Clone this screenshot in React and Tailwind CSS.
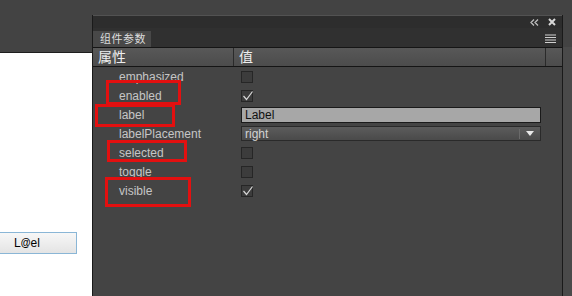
import React from "react";

const rows = [
  { name: "emphasized", type: "check", checked: false },
  { name: "enabled", type: "check", checked: true },
  { name: "label", type: "input", value: "Label" },
  { name: "labelPlacement", type: "select", value: "right" },
  { name: "selected", type: "check", checked: false },
  { name: "toggle", type: "check", checked: false },
  { name: "visible", type: "check", checked: true },
];

function Check({ checked }) {
  return (
    <div className="relative w-[12px] h-[12px] border border-[#262626] bg-[#3c3c3c]">
      {checked && (
        <svg className="absolute left-[0px] top-[-1px]" width="12" height="12" viewBox="0 0 12 12">
          <path d="M1.5 6 L4.5 9.5 L10.5 1.5" fill="none" stroke="#d8d8d8" strokeWidth="1.2" />
        </svg>
      )}
    </div>
  );
}

export default function App() {
  return (
    <div
      className="relative w-[572px] h-[296px] overflow-hidden bg-[#434343] flex"
      style={{ fontFamily: '"Liberation Sans", "Noto Sans CJK SC", sans-serif' }}
    >
      {/* left stage */}
      <div className="w-[92px] flex flex-col shrink-0">
        <div className="h-[53px] bg-[#434343] border-b border-[#1e1e1e]" />
        <div className="flex-1 bg-white pt-[179px]">
          <div className="ml-[-4px] w-[81px] h-[22px] border border-[#8ab6d6] bg-gradient-to-b from-[#f7f7f7] to-[#e4e4e4] flex items-center pl-[17px] text-[12px] text-black leading-none">
            L<span className="font-bold text-[10px]">@</span>el
          </div>
        </div>
      </div>

      {/* panel */}
      <div className="mt-[15px] w-[471px] flex flex-col border-l border-r border-[#1a1a1a] bg-[#444444] shrink-0">
        {/* title bar */}
        <div className="h-[13px] bg-[#2d2d2d] border-t border-[#525252] flex items-center justify-end pr-[6px] gap-[9px]">
          <svg width="9" height="7" viewBox="0 0 9 7">
            <path d="M4 0.5 L1 3.5 L4 6.5 M8 0.5 L5 3.5 L8 6.5" fill="none" stroke="#bdbdbd" strokeWidth="1.3" />
          </svg>
          <svg width="8" height="8" viewBox="0 0 8 8">
            <path d="M1 1 L7 7 M7 1 L1 7" stroke="#d8d8d8" strokeWidth="2" />
          </svg>
        </div>
        {/* tab row */}
        <div className="h-[19px] bg-[#303030] flex items-end justify-between">
          <div className="h-[16px] w-[58px] bg-[#484848] flex items-center pl-[7px] text-[11px] text-[#dcdcdc] leading-none tracking-[0.5px]">
            组件参数
          </div>
          <svg className="mb-[4px] mr-[6px]" width="11" height="9" viewBox="0 0 11 9">
            <path d="M0 1 H11 M0 3.5 H11 M0 6 H11 M0 8.5 H11" stroke="#cfcfcf" strokeWidth="1.2" />
          </svg>
        </div>
        {/* header */}
        <div className="h-[20px] border-t border-b border-[#151515] bg-gradient-to-b from-[#585858] to-[#4c4c4c] flex items-center text-[14px] text-[#eeeeee] leading-none">
          <div className="w-[141px] pl-[5px] h-full flex items-center border-r border-[#2a2a2a]">属性</div>
          <div className="w-[312px] pl-[5px] h-full flex items-center border-r border-[#2a2a2a]">值</div>
        </div>
        {/* rows */}
        <div className="flex flex-col pt-[0px]">
          {rows.map((r) => (
            <div key={r.name} className="h-[19px] flex items-center">
              <div className="w-[148px] pl-[26px] text-[12px] text-[#c6c6c6] leading-none">{r.name}</div>
              <div className="w-[300px] flex items-center">
                {r.type === "check" && <Check checked={r.checked} />}
                {r.type === "input" && (
                  <div className="w-[300px] h-[16px] border border-[#1a1a1a] bg-[#a7a7a7] flex items-center pl-[3px] text-[12px] text-[#111] leading-none">
                    {r.value}
                  </div>
                )}
                {r.type === "select" && (
                  <div className="w-[300px] h-[15px] border border-[#2a2a2a] bg-gradient-to-b from-[#5c5c5c] to-[#4a4a4a] flex items-center text-[12px] text-[#d2d2d2] leading-none">
                    <span className="flex-1 pl-[3px]">{r.value}</span>
                    <span className="w-[1px] h-[10px] bg-[#2c2c2c] border-r border-[#6a6a6a]" />
                    <svg className="mx-[6px]" width="8" height="6" viewBox="0 0 8 6">
                      <path d="M0 0 H8 L4 5 Z" fill="#e8e8e8" />
                    </svg>
                  </div>
                )}
              </div>
            </div>
          ))}
        </div>
      </div>

      {/* right strip */}
      <div className="flex-1 bg-[#4a4a4a] mt-[47px]" />

      {/* red highlight boxes */}
      <div className="absolute left-[106px] top-[80px] w-[75px] h-[25px] border-[3px] border-[#e31010]" />
      <div className="absolute left-[95px] top-[104px] w-[80px] h-[23px] border-[3px] border-[#e31010]" />
      <div className="absolute left-[107px] top-[140px] w-[80px] h-[22px] border-[3px] border-[#e31010]" />
      <div className="absolute left-[105px] top-[177px] w-[86px] h-[30px] border-[3px] border-[#e31010]" />
    </div>
  );
}
